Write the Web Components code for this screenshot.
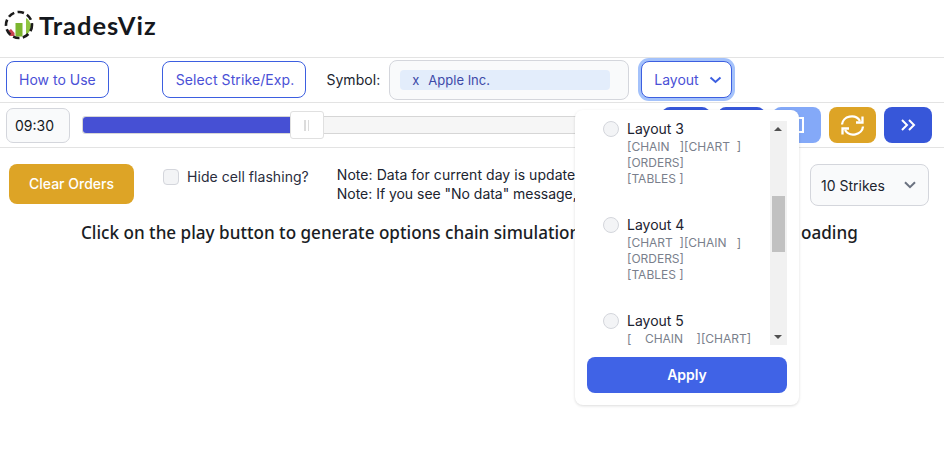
<!DOCTYPE html>
<html lang="en">
<head>
<meta charset="utf-8">
<title>TradesViz</title>
<style>
  html, body { margin: 0; padding: 0; background: #fff; }
  body { font-family: Inter, "Liberation Sans", sans-serif; color: #1f2432; position: relative; height: 450px; overflow: hidden; }
</style>
</head>
<body>
<tv-header></tv-header>
<tv-toolbar></tv-toolbar>
<tv-player></tv-player>
<tv-controls></tv-controls>
<tv-message></tv-message>
<tv-layout-menu>
  <tv-layout-option name="Layout 3"><div>[CHAIN&nbsp;&nbsp;&nbsp;][CHART&nbsp;&nbsp;]</div><div>[ORDERS]</div><div>[TABLES ]</div></tv-layout-option>
  <tv-layout-option name="Layout 4"><div>[CHART&nbsp;&nbsp;][CHAIN&nbsp;&nbsp;&nbsp;]</div><div>[ORDERS]</div><div>[TABLES ]</div></tv-layout-option>
  <tv-layout-option name="Layout 5"><div>[&nbsp;&nbsp;&nbsp;&nbsp;CHAIN&nbsp;&nbsp;&nbsp;&nbsp;][CHART]</div></tv-layout-option>
</tv-layout-menu>

<script>
// Petit helper pour creer le shadow root
class TvBase extends HTMLElement {
  constructor() {
    super();
    this.attachShadow({ mode: 'open' });
  }
  connectedCallback() {
    this.shadowRoot.innerHTML = this.render();
  }
}

class TvHeader extends TvBase {
  render() {
    return `
      <style>
        :host { display: flex; align-items: center; height: 58px; box-sizing: border-box; padding: 0 0 8px 4px; border-bottom: 1px solid #e3e3e3; }
        svg { display: block; margin-right: 5px; }
        .name { font: 700 25.5px Lato, "Open Sans", sans-serif; color: #15181d; letter-spacing: 1px; }
      </style>
      <svg width="30" height="30" viewBox="0 0 30 30">
        <path d="M4 21 L7 19 L10.5 23 L10.5 26 L6 26Z" fill="#c8444f"/>
        <rect x="11.5" y="13" width="7" height="13.5" fill="#7cb62f"/>
        <path d="M22 8 A11 11 0 0 1 27 16 A11 11 0 0 1 22 25Z" fill="#8fc440"/>
        <circle cx="15" cy="15" r="13" fill="none" stroke="#1b1b1b" stroke-width="2.6" stroke-dasharray="6.5 3.4"/>
      </svg>
      <span class="name">TradesViz</span>`;
  }
}

class TvButton extends TvBase {
  render() {
    return `
      <style>
        :host { display: inline-flex; align-items: center; justify-content: center; box-sizing: border-box; height: 37px; padding: 0 var(--pad-right, var(--pad, 13px)) 0 var(--pad, 13px); border: 1px solid #3d5fe0; border-radius: 8px; background: #fff; color: #4a50d6; font-size: 14px; white-space: nowrap; }
        :host([ring]) { box-shadow: 0 0 0 3px #a4c2fb; }
      </style>
      <slot></slot>`;
  }
}

class TvToolbar extends TvBase {
  render() {
    return `
      <style>
        :host { display: flex; align-items: flex-start; height: 45px; box-sizing: border-box; padding: 3px 0 0 6px; border-bottom: 1px solid #e3e3e3; font-size: 14px; }
        .how { --pad: 12px; }
        .strike { margin-left: 53px; --pad-right: 11px; letter-spacing: .1px; }
        .label { margin: 0 9px 0 20px; line-height: 37px; color: #20242f; letter-spacing: .05px; }
        .symbol { box-sizing: border-box; width: 240px; height: 40px; margin-top: -1px; padding: 9px 18px 9px 10px; background: #f9fafb; border: 1px solid #d4d6dc; border-radius: 8px; }
        .tag { display: flex; height: 20px; align-items: center; padding-left: 12px; background: #e3edfb; border-radius: 4px; color: #3d4aa8; font-size: 13px; }
        .tag b { font-weight: 400; margin-right: 9px; }
        .layout { margin-left: 12px; --pad: 12px; }
        svg { margin: 0 -3px 0 10px; }
      </style>
      <tv-button class="how">How to Use</tv-button>
      <tv-button class="strike">Select Strike/Exp.</tv-button>
      <span class="label">Symbol:</span>
      <div class="symbol"><div class="tag"><b>x</b>Apple Inc.</div></div>
      <tv-button class="layout" ring>Layout
        <svg width="13" height="8" viewBox="0 0 13 8"><path d="M1.5 1.5 L6.5 6 L11.5 1.5" fill="none" stroke="#3d5fe0" stroke-width="2"/></svg>
      </tv-button>`;
  }
}

class TvPlayer extends TvBase {
  render() {
    return `
      <style>
        :host { display: flex; align-items: center; height: 45px; box-sizing: border-box; padding: 0 12px 0 6px; border-bottom: 1px solid #e3e3e3; }
        .time { box-sizing: border-box; width: 64px; height: 35px; line-height: 33px; padding-left: 8px; background: #f9fafb; border: 1px solid #d4d6dc; border-radius: 7px; font-size: 14px; color: #15181d; }
        .track { position: relative; width: 566px; height: 18px; margin: 0 12px; box-sizing: border-box; background: #f6f6f6; border: 1px solid #d6d6d6; border-radius: 3px; }
        .fill { width: 207px; height: 100%; background: #4650d4; border-radius: 3px 0 0 3px; }
        .handle { position: absolute; left: 207px; top: -6px; box-sizing: border-box; width: 34px; height: 28px; background: #fff; border: 1px solid #e0e0e0; border-radius: 3px; display: flex; align-items: center; justify-content: center; gap: 2px; }
        .handle i { width: 1.5px; height: 11px; background: #dcdcdc; }
        .btn { box-sizing: border-box; width: 48px; height: 36px; border-radius: 8px; margin-left: 8px; display: flex; align-items: center; justify-content: center; }
        .blue { background: #3757d9; }
        .light { background: #84a9f8; }
        .gold { background: #dda426; }
      </style>
      <div class="time">09:30</div>
      <div class="track"><div class="fill"></div><div class="handle"><i></i><i></i></div></div>
      <div class="btn blue"></div>
      <div class="btn blue"></div>
      <div class="btn light">
        <svg width="14" height="16" viewBox="0 0 14 16"><rect x="1" y="1" width="12" height="14" fill="none" stroke="#fff" stroke-width="2"/></svg>
      </div>
      <div class="btn gold">
        <svg width="25" height="21" viewBox="0 0 25 21" fill="none" stroke="#fff" stroke-width="2.3"><path d="M2 9.5 A9.6 8.6 0 0 1 20 6"/><path d="M23 11.5 A9.6 8.6 0 0 1 5 15"/><path d="M22.5 1.5 V7.5 H16"/><path d="M2.5 19.5 V13.5 H9"/></svg>
      </div>
      <div class="btn blue">
        <svg width="16" height="14" viewBox="0 0 16 14" fill="none" stroke="#fff" stroke-width="2"><path d="M2 2 L7 7 L2 12"/><path d="M9 2 L14 7 L9 12"/></svg>
      </div>`;
  }
}

class TvControls extends TvBase {
  render() {
    return `
      <style>
        :host { display: flex; height: 58px; box-sizing: border-box; padding: 16px 15px 0 9px; font-size: 14px; overflow: hidden; }
        .clear { box-sizing: border-box; width: 125px; height: 40px; line-height: 40px; text-align: center; background: #dda426; border-radius: 8px; color: #fff; font-weight: 500; }
        .check { display: flex; align-items: center; height: 17px; margin: 4px 0 0 29px; color: #2a2d3d; white-space: nowrap; letter-spacing: .05px; }
        .box { box-sizing: border-box; width: 16px; height: 16px; margin-right: 8px; background: #f3f4f6; border: 1px solid #d4d6dc; border-radius: 4px; }
        .notes { width: 238px; margin: 1px 0 0 28px; line-height: 19px; white-space: nowrap; color: #20242f; flex: none; letter-spacing: .05px; }
        .notes .second { letter-spacing: -.03px; }
        .strikes { box-sizing: border-box; width: 119px; height: 42px; margin-left: auto; display: flex; align-items: center; justify-content: space-between; padding: 0 12px 0 10px; background: #f9fafb; border: 1px solid #d4d6dc; border-radius: 8px; color: #20242f; }
      </style>
      <div class="clear">Clear Orders</div>
      <div class="check"><span class="box"></span>Hide cell flashing?</div>
      <div class="notes">
        <div>Note: Data for current day is update</div>
        <div class="second">Note: If you see "No data" message,</div>
      </div>
      <div class="strikes">10 Strikes
        <svg width="12" height="8" viewBox="0 0 12 8"><path d="M1 1.2 L6 6.2 L11 1.2" fill="none" stroke="#6b7280" stroke-width="2"/></svg>
      </div>`;
  }
}

class TvMessage extends TvBase {
  render() {
    return `
      <style>
        :host { display: flex; margin-top: 15px; padding-left: 81px; font: 500 17.1px "Noto Sans", "Open Sans", sans-serif; color: #1a1d24; white-space: nowrap; }
        .left { width: 494px; flex: none; }
        .right { margin-left: 226px; }
      </style>
      <span class="left">Click on the play button to generate options chain simulation</span>
      <span class="right">oading</span>`;
  }
}

class TvLayoutMenu extends TvBase {
  render() {
    return `
      <style>
        :host { position: absolute; left: 575px; top: 110px; box-sizing: border-box; width: 224px; height: 295px; padding: 11px 12px 12px; background: #fff; border-radius: 8px; box-shadow: 0 1px 3px rgba(0,0,0,.14); }
        .scroll { position: relative; height: 224px; overflow: hidden; padding-left: 16px; }
        .bar { position: absolute; right: 0; top: 0; width: 17px; height: 224px; background: #f1f1f1; }
        .thumb { position: absolute; left: 2px; top: 75px; width: 13px; height: 56px; background: #c1c1c1; }
        .up, .down { position: absolute; left: 4px; width: 0; height: 0; border-left: 4px solid transparent; border-right: 4px solid transparent; }
        .up { top: 6px; border-bottom: 4px solid #505050; }
        .down { bottom: 6px; border-top: 4px solid #505050; }
        .apply { margin-top: 12px; height: 36px; line-height: 36px; text-align: center; background: #4063e6; border-radius: 8px; color: #fff; font-size: 14px; font-weight: 600; }
      </style>
      <div class="scroll">
        <slot></slot>
        <div class="bar"><div class="up"></div><div class="thumb"></div><div class="down"></div></div>
      </div>
      <div class="apply">Apply</div>`;
  }
}

class TvLayoutOption extends TvBase {
  render() {
    return `
      <style>
        :host { display: flex; height: 96px; }
        .radio { box-sizing: border-box; width: 16px; height: 16px; margin-right: 8px; background: #f3f4f6; border: 1px solid #d4d6dc; border-radius: 50%; flex: none; }
        .name { margin-top: -1px; font-size: 14px; line-height: 17px; color: #1c2230; }
        .desc { margin-top: 2px; font-size: 12px; line-height: 16px; color: #7a7f8c; white-space: nowrap; }
      </style>
      <div class="radio"></div>
      <div>
        <div class="name">${this.getAttribute('name')}</div>
        <div class="desc"><slot></slot></div>
      </div>`;
  }
}

customElements.define('tv-header', TvHeader);
customElements.define('tv-button', TvButton);
customElements.define('tv-toolbar', TvToolbar);
customElements.define('tv-player', TvPlayer);
customElements.define('tv-controls', TvControls);
customElements.define('tv-message', TvMessage);
customElements.define('tv-layout-menu', TvLayoutMenu);
customElements.define('tv-layout-option', TvLayoutOption);
</script>
</body>
</html>
